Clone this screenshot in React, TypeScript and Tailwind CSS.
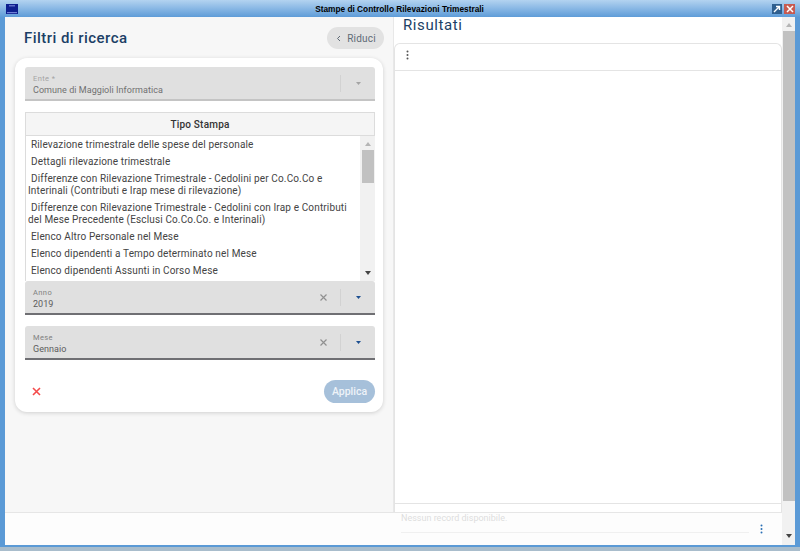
import React from "react";

const items: string[] = [
  "Rilevazione trimestrale delle spese del personale",
  "Dettagli rilevazione trimestrale",
  "Differenze con Rilevazione Trimestrale - Cedolini per Co.Co.Co e Interinali (Contributi e Irap mese di rilevazione)",
  "Differenze con Rilevazione Trimestrale - Cedolini con Irap e Contributi del Mese Precedente (Esclusi Co.Co.Co. e Interinali)",
  "Elenco Altro Personale nel Mese",
  "Elenco dipendenti a Tempo determinato nel Mese",
  "Elenco dipendenti Assunti in Corso Mese",
];

function Caret({ color, w = 5, h = 3 }: { color: string; w?: number; h?: number }) {
  return (
    <svg width={w} height={h} viewBox="0 0 7 5" preserveAspectRatio="none">
      <path d="M0 0 H7 L3.5 5 Z" fill={color} />
    </svg>
  );
}

function Select({ label, value, clear, disabled }: { label: string; value: string; clear?: boolean; disabled?: boolean }) {
  return (
    <div className={`flex h-[34px] shrink-0 items-center rounded-t-[3px] bg-[#e0e0e0] border-b-2 ${disabled ? "border-[#c4c4c4]" : "border-[#6f6f73]"}`}>
      <div className="flex-1 pl-2 pt-[3px]">
        <div className={`text-[7.5px] leading-[10px] tracking-[0.4px] ${disabled ? "text-[#a4a4a4]" : "text-[#808080]"}`}>{label}</div>
        <div className={`text-[9px] leading-[12px] tracking-[0.05px] ${disabled ? "text-[#707070]" : "text-[#5c5c5c]"}`}>{value}</div>
      </div>
      {clear && (
        <svg width="7" height="7" viewBox="0 0 7 7" className="mr-[13px]">
          <path d="M0.5 0.5 L6.5 6.5 M6.5 0.5 L0.5 6.5" stroke="#909090" strokeWidth="1.2" />
        </svg>
      )}
      <div className="h-[17px] w-px bg-[#d2d2d2]" />
      <div className="flex w-[34px] justify-center">
        <Caret color={disabled ? "#a4a4a4" : "#1d4f91"} />
      </div>
    </div>
  );
}

export default function App() {
  return (
    <div className="flex h-[551px] w-[800px] flex-col overflow-hidden bg-[#5b9ad6] font-['Roboto',sans-serif]">
      <div className="flex h-[17px] shrink-0 items-center bg-gradient-to-b from-[#b3d3f0] to-[#5e9cd8] pl-[6px] pr-[5px] pt-[1px]">
        <svg width="12" height="10" viewBox="0 0 12 10">
          <rect width="12" height="10" fill="#0d1f8f" />
          <rect x="3" y="1" width="6" height="1.5" fill="#5c6cc8" />
          <rect x="1" y="8" width="10" height="1.2" fill="#6f7fd6" />
        </svg>
        <div className="flex-1 pl-[9px] text-center font-['Liberation_Sans',sans-serif] text-[8.3px] font-bold leading-[16px] text-black">
          Stampe di Controllo Rilevazioni Trimestrali
        </div>
        <div className="mr-[1px] flex h-[10px] w-[10px] items-center justify-center bg-[#2f5f8f]">
          <svg width="8" height="8" viewBox="0 0 8 8">
            <path d="M1 7 L6.5 1.5 M3 1.5 H6.5 V5" stroke="#fff" strokeWidth="1.4" fill="none" />
          </svg>
        </div>
        <div className="ml-[1px] flex h-[10px] w-[11px] items-center justify-center bg-[#c75a50]">
          <svg width="8" height="8" viewBox="0 0 8 8">
            <path d="M1 1 L7 7 M7 1 L1 7" stroke="#fff" strokeWidth="1.5" />
          </svg>
        </div>
      </div>

      <div className="flex min-h-0 flex-1 pl-[5px] pr-[5px]">
        <div className="flex min-w-0 flex-1 flex-col bg-white">
          <div className="flex min-h-0 flex-1">
            <div className="flex w-[389px] shrink-0 flex-col border-r border-[#e8e8e8] bg-[#f7f7f7] pl-[10px] pr-[10px]">
              <div className="flex h-[41px] items-center justify-between pt-[1px]">
                <div className="pl-[9px] text-[15px] font-medium tracking-[0.45px] text-[#1c3f66]">Filtri di ricerca</div>
                <div className="mr-[-1px] flex h-[22px] w-[57px] items-center justify-center gap-[6px] rounded-full bg-[#e2e2e2] pl-[1px] text-[10px] tracking-[0.2px] text-[#5f6b76]">
                  <svg width="5" height="7" viewBox="0 0 5 7">
                    <path d="M4 1 L1.5 3.5 L4 6" stroke="#5f6b76" strokeWidth="1" fill="none" />
                  </svg>
                  Riduci
                </div>
              </div>
              <div className="flex h-[354px] w-[368px] flex-col rounded-[12px] bg-white pl-[10px] pr-[8px] pt-[9px] shadow-[0_1px_4px_rgba(0,0,0,0.16)]">
                <Select label="Ente *" value="Comune di Maggioli Informatica" disabled />
                <div className="mt-[11px] flex h-[24px] shrink-0 items-center justify-center border border-[#dcdcdc] bg-[#f5f5f5] text-[10px] font-medium tracking-[0.2px] text-[#333]">
                  Tipo Stampa
                </div>
                <div className="flex h-[145px] shrink-0 overflow-hidden border-l border-[#dcdcdc]">
                  <div className="flex-1 pl-[2px] pr-[6px] text-[10px] leading-[11.5px] tracking-[0.14px] text-[#444]">
                    {items.map((t, i) => (
                      <div key={i} className="py-[3px] indent-[3px] mb-[-0.3px]">{t}</div>
                    ))}
                  </div>
                  <div className="flex w-[15px] shrink-0 flex-col items-center bg-[#f1f1f1] pt-[6px]">
                    <div className="rotate-180"><Caret color="#b5b5b5" w={6} h={4} /></div>
                    <div className="mt-[4px] h-[33px] w-[12px] bg-[#c1c1c1]" />
                    <div className="mt-auto mb-[6px]"><Caret color="#444" w={6} h={4} /></div>
                  </div>
                </div>
                <Select label="Anno" value="2019" clear />
                <div className="h-[11px] shrink-0" />
                <Select label="Mese" value="Gennaio" clear />
                <div className="mt-auto mb-[9px] flex items-center justify-between">
                  <svg width="9" height="9" viewBox="0 0 9 9" className="ml-[7px]">
                    <path d="M1 1 L8 8 M8 1 L1 8" stroke="#f44b4b" strokeWidth="1.6" />
                  </svg>
                  <div className="flex h-[23px] w-[51px] items-center justify-center rounded-full bg-[#a6c0da] text-[10.5px] font-medium text-[#eef3f8]">
                    Applica
                  </div>
                </div>
              </div>
            </div>

            <div className="flex min-w-0 flex-1 flex-col">
              <div className="h-[26px] shrink-0 pl-[9px] text-[15px] leading-[17px] tracking-[0.6px] text-[#1c3f66]">Risultati</div>
              <div className="flex min-h-0 flex-1 flex-col rounded-t-[6px] border border-b-0 border-[#e4e4e4]">
                <div className="flex h-[27px] shrink-0 items-center border-b border-[#e4e4e4] pb-[4px] pl-[11px]">
                  <svg width="3" height="10" viewBox="0 0 3 10">
                    <circle cx="1.5" cy="1.5" r="1" fill="#555" />
                    <circle cx="1.5" cy="5" r="1" fill="#555" />
                    <circle cx="1.5" cy="8.5" r="1" fill="#555" />
                  </svg>
                </div>
                <div className="flex-1" />
                <div className="h-[9px] shrink-0 border-t border-[#e4e4e4]" />
              </div>
            </div>
          </div>

          <div className="flex h-[33px] shrink-0 border-t border-[#e6e6e6] bg-[#fdfdfd]">
            <div className="w-[389px] shrink-0" />
            <div className="flex flex-1 flex-col">
              <div className="ml-[7px] mr-[33px] h-[20px] border-b border-[#f0f0f0] text-[9px] leading-[10px] text-[#dedede]">
                Nessun record disponibile.
              </div>
              <div className="mr-[19px] mt-[-9px] self-end">
                <svg width="3" height="10" viewBox="0 0 3 10">
                  <circle cx="1.5" cy="1.5" r="1" fill="#2a6fb5" />
                  <circle cx="1.5" cy="5" r="1" fill="#2a6fb5" />
                  <circle cx="1.5" cy="8.5" r="1" fill="#2a6fb5" />
                </svg>
              </div>
            </div>
          </div>
        </div>

        <div className="flex w-[13px] shrink-0 flex-col items-center bg-[#f1f1f1] pt-[6px]">
          <div className="rotate-180"><Caret color="#b5b5b5" w={6} h={4} /></div>
          <div className="mt-[4px] h-[470px] w-[12px] bg-[#c1c1c1]" />
          <div className="mt-auto mb-[7px]"><Caret color="#444" w={6} h={4} /></div>
        </div>
      </div>

      <div className="h-[2px] shrink-0 bg-[#5b9ad6]" />
      <div className="h-[4px] shrink-0 bg-[#a9bdcc]" />
    </div>
  );
}
